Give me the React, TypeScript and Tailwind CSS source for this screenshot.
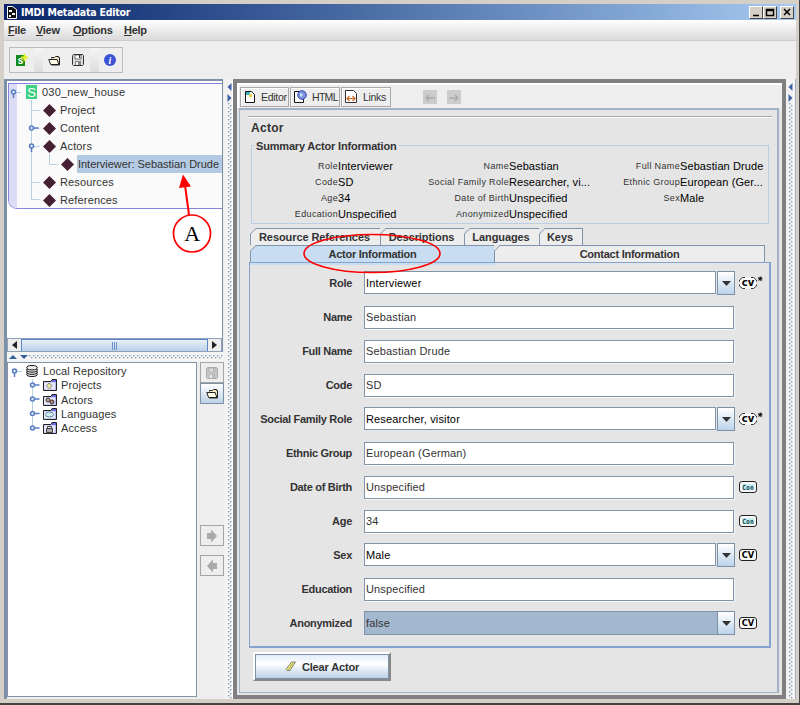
import type { ReactNode } from "react";
import clsx from "clsx";

type HelperKind = "cv" | "cv-open" | "con";
type Field = { label: string; value: string; combo?: boolean; disabled?: boolean; helper?: HelperKind };

const fields: Field[] = [
  { label: "Role", value: "Interviewer", combo: true, helper: "cv-open" },
  { label: "Name", value: "Sebastian" },
  { label: "Full Name", value: "Sebastian Drude" },
  { label: "Code", value: "SD" },
  { label: "Social Family Role", value: "Researcher, visitor", combo: true, helper: "cv-open" },
  { label: "Ethnic Group", value: "European (German)" },
  { label: "Date of Birth", value: "Unspecified", helper: "con" },
  { label: "Age", value: "34", helper: "con" },
  { label: "Sex", value: "Male", combo: true, helper: "cv" },
  { label: "Education", value: "Unspecified" },
  { label: "Anonymized", value: "false", combo: true, disabled: true, helper: "cv" },
];

const summary = [
  [["Role", "Interviewer"], ["Code", "SD"], ["Age", "34"], ["Education", "Unspecified"]],
  [["Name", "Sebastian"], ["Social Family Role", "Researcher, vi..."], ["Date of Birth", "Unspecified"], ["Anonymized", "Unspecified"]],
  [["Full Name", "Sebastian Drude"], ["Ethnic Group", "European (Ger..."], ["Sex", "Male"]],
];

function Dots({ id }: { id: string }) {
  return (
    <svg className="block h-full w-full">
      <defs>
        <pattern id={id} width="4" height="4" patternUnits="userSpaceOnUse">
          <rect width="4" height="4" fill="#f2f4f6" />
          <rect width="1.400" height="1.400" x="0" y="0" fill="#8b9db3" />
          <rect width="1.400" height="1.400" x="2" y="2" fill="#8b9db3" />
        </pattern>
      </defs>
      <rect width="100%" height="100%" fill={`url(#${id})`} />
    </svg>
  );
}

function VerticalDivider({ id }: { id: string }) {
  return (
    <div className="flex h-full flex-col items-end border-r border-white bg-[#f2f2f2] pt-[4px]">
      <svg width="5" height="20" className="shrink-0">
        <path d="M4.500 0v8L0.500 4z" fill="#3f5fa8" />
        <path d="M0.500 11v8L4.500 15z" fill="#3f5fa8" />
      </svg>
      <div className="w-[4px] grow"><Dots id={id} /></div>
    </div>
  );
}

function FolderIcon() {
  return (
    <svg width="13" height="11" viewBox="0 0 13 11">
      <path d="M3.500 3.500V2.500h3l1-1h3v1h1v7.500h-8" fill="#f4ecc8" stroke="#222" />
      <path d="M0.800 4.500h8.400l1.600 5H2.600z" fill="#fffbe6" stroke="#222" />
    </svg>
  );
}

function DiskIcon({ muted }: { muted?: boolean }) {
  const c = muted ? "#aaa" : "#333";
  return (
    <svg width="12" height="12" viewBox="0 0 12 12">
      <path d="M1.500 0.500h9l1 1v9l-1 1h-9l-1-1v-9z" fill={muted ? "#c6c6c6" : "#ddd"} stroke={c} />
      <path d="M3 1h6v4H3z" fill={muted ? "#ddd" : "#fff"} stroke={c} strokeWidth="0.700" />
      <path d="M3 7h6v4H3z" fill={muted ? "#bbb" : "#888"} />
      <path d="M4 8h2v3H4z" fill="#eee" />
      <path d="M7.500 1v3" stroke={c} />
    </svg>
  );
}

function BigArrow({ left }: { left?: boolean }) {
  return (
    <svg width="12" height="14" viewBox="0 0 12 14" className={clsx(left && "rotate-180")}>
      <path d="M1 4h4V0.500L11 7l-6 6.500V10H1z" fill="#a9a9a9" />
    </svg>
  );
}

function HelperIcon({ kind }: { kind: HelperKind }) {
  if (kind === "con") {
    return (
      <svg width="18" height="14" viewBox="0 0 18 14">
        <rect x="0.500" y="1.500" width="17" height="11" rx="2.500" fill="#f8f8f8" stroke="#222" />
        <rect x="3" y="4" width="12" height="6" fill="#c5eef2" />
        <text x="9" y="9.500" textAnchor="middle" textLength="11.500" lengthAdjust="spacingAndGlyphs" fontSize="7" fontWeight="700" fontFamily="DejaVu Sans Mono, monospace" fill="#0c4450">Con</text>
      </svg>
    );
  }
  const open = kind === "cv-open";
  return (
    <svg width="25" height="14" viewBox="0 0 25 14">
      {open ? (
        <>
          <rect x="1" y="1.500" width="16" height="11" rx="3" fill="#fafafa" />
          <path d="M6 1.500H3.500L0.500 4V5.500M0.500 8.500V10L3.500 12.500H6M12 1.500h2.500l3 2.500V5.500M17.500 8.500V10l-3 2.500H12" fill="none" stroke="#333" />
        </>
      ) : (
        <rect x="0.500" y="1.500" width="17" height="11" rx="2.500" fill="#fafafa" stroke="#222" />
      )}
      <text x="9" y="10.400" textAnchor="middle" textLength="12.500" lengthAdjust="spacingAndGlyphs" fontSize={open ? 10.5 : 9.5} fontWeight="700" fontFamily="DejaVu Sans, sans-serif" fill="#000">{open ? "cv" : "CV"}</text>
      {open && <path d="M19.500 1l3.500 3.500m0-3.500L19.500 4.500M21.250 0.500V5M19 2.750h4.500" stroke="#111" />}
    </svg>
  );
}

function Diamond() {
  return <svg width="13" height="13" className="shrink-0"><path d="M6.500 0L13 6.500 6.500 13 0 6.500z" fill="#452033" /></svg>;
}

function TreeRow({ label, deep }: { label: string; deep?: boolean }) {
  return (
    <div className={clsx("flex h-[18px] items-center", deep ? "pl-[52px]" : "pl-[34px]")}>
      <Diamond />
      <span className={clsx("ml-[3px] h-[18px] whitespace-nowrap pl-[1px] leading-[18px]", deep ? "grow bg-[#b3cae2] tracking-[-0.030px]" : "tracking-[0.150px]")}>{label}</span>
    </div>
  );
}

function Knob({ x, y, open }: { x: number; y: number; open?: boolean }) {
  return (
    <g stroke="#5a7dc0" strokeWidth="1.500" fill="#dce8f6">
      {open ? <path d={`M${x} ${y + 1}v5`} /> : <path d={`M${x + 1} ${y}h6`} />}
      <circle cx={x} cy={y} r="2" />
    </g>
  );
}

function ActorTree() {
  return (
    <div className="relative h-[126px] overflow-hidden rounded-bl-[9px] border-y border-l border-[#8484dc] bg-[#fafafa]">
      <div className="absolute inset-y-0 left-0 w-[8px] bg-[#dcdcf7]" />
      <svg width="60" height="124" className="absolute left-0 top-0">
        <path d="M6 8.500h6M22.500 16v99.500M22.500 26.500h8M22.500 44.500h8M22.500 62.500h8M22.500 98.500h8M22.500 115.500h8M40.500 70v10.500h8" fill="none" stroke="#b5cfe4" />
        <Knob x={4.5} y={8} open />
        <Knob x={22.5} y={44} />
        <Knob x={22.5} y={62} open />
      </svg>
      <div className="relative -mt-px">
        <div className="flex h-[18px] items-center pl-[17px]">
          <svg width="11" height="14">
            <rect width="11" height="14" fill="#3ed183" />
            <text x="5.500" y="11.500" textAnchor="middle" fontSize="13" fill="#fff">S</text>
          </svg>
          <span className="ml-[5px] tracking-[0.200px]">030_new_house</span>
        </div>
        <TreeRow label="Project" />
        <TreeRow label="Content" />
        <TreeRow label="Actors" />
        <TreeRow label="Interviewer: Sebastian Drude" deep />
        <TreeRow label="Resources" />
        <TreeRow label="References" />
      </div>
    </div>
  );
}

function RepoIcon({ kind }: { kind: string }) {
  return (
    <svg width="14" height="12" viewBox="0 0 14 12" className="shrink-0">
      <path d="M0.500 2.500H8l1-2h4.500v11H0.500z" fill="#b9b9f0" stroke="#222" />
      <path d="M9 1h4v2H9z" fill="#6a6ae0" />
      <path d="M1 3.500h11v7H1z" fill="#e6e6fa" />
      {kind === "Projects" && <path d="M6 4l3 2.500L6.500 10 3.500 7z" fill="#ece9a0" stroke="#666" strokeWidth="0.700" />}
      {kind === "Actors" && <><circle cx="5" cy="6" r="2" fill="#d7a490" stroke="#333" /><circle cx="9" cy="8" r="2" fill="#b88" stroke="#333" /></>}
      {kind === "Languages" && <ellipse cx="6.500" cy="6.500" rx="4" ry="2.500" fill="#cdeef2" stroke="#6a8a9a" />}
      {kind === "Access" && <><path d="M4.500 7V4.500h4V7" fill="none" stroke="#444" /><path d="M3.500 6.500h6v4h-6z" fill="#aaa" stroke="#444" /></>}
    </svg>
  );
}

function Repository() {
  return (
    <div className="relative h-full border border-[#8494a8] bg-white pt-px">
      <svg width="34" height="74" className="absolute left-0 top-0">
        <path d="M7 8.500h7M24.500 16v50" stroke="#b5cfe4" />
        <Knob x={6.5} y={8} open />
        <Knob x={24.5} y={22} />
        <Knob x={24.5} y={36} />
        <Knob x={24.5} y={50.5} />
        <Knob x={24.5} y={65} />
      </svg>
      <div className="relative tracking-[0.100px]">
        <div className="flex h-[14.300px] items-center pl-[18px]">
          <svg width="12" height="12" viewBox="0 0 12 12" fill="#eee" stroke="#111" strokeWidth="1">
            <ellipse cx="6" cy="9.300" rx="5.300" ry="2.200" />
            <ellipse cx="6" cy="7.100" rx="5.300" ry="2.200" />
            <ellipse cx="6" cy="4.900" rx="5.300" ry="2.200" />
            <ellipse cx="6" cy="2.700" rx="5.300" ry="2.200" />
          </svg>
          <span className="ml-[5px] leading-[14px]">Local Repository</span>
        </div>
        {["Projects", "Actors", "Languages", "Access"].map((name) => (
          <div key={name} className="flex h-[14.300px] items-center pl-[35px]">
            <RepoIcon kind={name} />
            <span className="ml-[4px] leading-[14px]">{name}</span>
          </div>
        ))}
      </div>
    </div>
  );
}

function SideButton({ children, active }: { children: ReactNode; active?: boolean }) {
  return (
    <button className={clsx("flex h-[21px] w-[24px] items-center justify-center border", active ? "border-[#7a8ea5] bg-gradient-to-b from-white to-[#bdd2e8]" : "border-[#a5a5a5] bg-[#eee]")}>
      {children}
    </button>
  );
}

function LeftPane() {
  return (
    <div className="flex w-[220px] shrink-0 flex-col border-l-[3px] border-[#7c90a8] bg-[#eee]">
      <div className="flex h-[273px] w-[216px] shrink-0 flex-col border-r border-t-2 border-[#7c90a8] bg-white pl-px pt-[2px]">
        <ActorTree />
        <div className="grow" />
        <div className="-ml-px flex h-[14px] border border-[#8da0b8] bg-[#eee]">
          <div className="flex w-[13px] items-center justify-center"><svg width="5" height="8"><path d="M5 0v8L0 4z" fill="#222" /></svg></div>
          <div className="flex grow items-center justify-center gap-px border-x border-t border-[#5c85ca] bg-gradient-to-b from-[#eaf2fb] to-[#b9d0e9]">
            <i className="h-[8px] w-px bg-[#6f91cc]" /><i className="h-[8px] w-px bg-[#6f91cc]" /><i className="h-[8px] w-px bg-[#6f91cc]" />
          </div>
          <div className="flex w-[13px] items-center justify-center"><svg width="5" height="8"><path d="M0 0v8L5 4z" fill="#222" /></svg></div>
        </div>
      </div>
      <div className="flex h-[10px] shrink-0 items-center bg-[#f4f4f4]">
        <svg width="20" height="5" className="ml-[2px] shrink-0"><path d="M0 4h8L4 0zM11 0h8l-4 4z" fill="#35609c" /></svg>
        <div className="h-[4px] w-[194px]"><Dots id="dots-h" /></div>
      </div>
      <div className="flex grow pb-[2px]">
        <div className="w-[190px]"><Repository /></div>
        <div className="ml-[3px] flex flex-col">
          <SideButton><DiskIcon muted /></SideButton>
          <SideButton active><FolderIcon /></SideButton>
          <div className="h-[121px]" />
          <SideButton><BigArrow /></SideButton>
          <div className="h-[9px]" />
          <SideButton><BigArrow left /></SideButton>
        </div>
      </div>
    </div>
  );
}

function ViewTab({ icon, label, width }: { icon: ReactNode; label: string; width: string }) {
  return (
    <button className={clsx("flex h-[20px] items-center gap-[5px] border border-[#a9a9a9] bg-[#eee] pl-[3px] text-[10.500px] shadow-[inset_1px_1px_0_#fff]", label === "HTML" ? "tracking-[-0.700px]" : "tracking-[-0.300px]", width)}>
      {icon}
      {label}
    </button>
  );
}

function FormTab({ label, width, active, tight }: { label: string; width: string; active?: boolean; tight?: boolean }) {
  return (
    <div className={clsx("relative flex h-[17px] items-center justify-center border-r border-t border-[#8095ad] pb-px font-bold", tight ? "tracking-[-0.250px]" : "pr-[2px] tracking-[-0.080px]", active ? "bg-[#c8ddf2]" : "bg-[#ededed]", width)}>
      <svg width="7" height="17" className="absolute -left-px -top-px">
        <path d="M0 0h6L0 6z" fill="#e5e5e5" />
        <path d="M0.500 17V6L6 0.500" fill="none" stroke="#8095ad" />
      </svg>
      <span className="relative">{label}</span>
    </div>
  );
}

function FieldRow({ f }: { f: Field }) {
  return (
    <div className="flex h-[34.050px] items-center">
      <div className="w-[102px] whitespace-nowrap text-right font-bold tracking-[-0.300px]">{f.label}</div>
      <div className="ml-[12px] w-[371px]">
        {f.combo ? (
          <div className="flex h-[24px]">
            <div className={clsx("flex grow items-center border pl-[1px]", f.disabled ? "h-full border-[#8294aa] bg-[#a3b8ce] text-[#333]" : "h-[23px] border-[#8294aa] bg-white text-black")}>
              <span className="tracking-[0.150px]">{f.value}</span>
            </div>
            <div className={clsx("flex w-[18px] items-center justify-center border border-[#7c90a8] bg-gradient-to-b from-white to-[#bdd3ea]", f.disabled ? "-ml-px" : "ml-px")}>
              <svg width="9" height="5"><path d="M0 0h9L4.500 5z" fill="#333" /></svg>
            </div>
          </div>
        ) : (
          <div className="flex h-[23px] w-[370px] items-center border border-[#8294aa] bg-white pl-[1px] tracking-[0.150px] text-[#333] shadow-[1px_1px_0_#f7f7f7]">{f.value}</div>
        )}
      </div>
      <div className="ml-[4px]">{f.helper && <HelperIcon kind={f.helper} />}</div>
    </div>
  );
}

function EditorPane() {
  return (
    <div className="flex w-[553px] shrink-0 flex-col border-4 border-[#808080] bg-[#e5e5e5]">
      <div className="flex h-[25px] shrink-0 items-center gap-px border-l-2 border-t-2 border-white bg-[#eee] pl-px">
        <ViewTab width="w-[49px]" label="Editor" icon={
          <svg width="12" height="12"><path d="M1.500 0.500h6l3 3v8h-9z" fill="#fff" stroke="#111" /><path d="M2 1h4v3H2z" fill="#3ab5c8" /><path d="M5 3h3v3H5z" fill="#e6d54a" /></svg>
        } />
        <ViewTab width="w-[50px]" label="HTML" icon={
          <svg width="13" height="13" className="shrink-0"><path d="M0.500 1.500h6l3 3v8h-9z" fill="#fff" stroke="#111" /><circle cx="8" cy="5" r="4.300" fill="#8190de" stroke="#3a48b8" /><path d="M6 3l3 1-1 3-2-1z" fill="#bfe0f0" /></svg>
        } />
        <ViewTab width="w-[50px]" label="Links" icon={
          <svg width="13" height="13" className="shrink-0"><path d="M0.500 0.500h8l3 3v9H0.500z" fill="#fff" stroke="#333" /><path d="M2 8.500h8M4.500 6L2 8.500 4.500 11M7.500 6L10 8.500 7.500 11" fill="none" stroke="#d2691e" strokeWidth="1.200" /></svg>
        } />
        <div className="ml-[31px] flex gap-[10px]">
          <svg width="14" height="14"><rect width="14" height="14" fill="#ccc" /><path d="M3 8h9M6 5L3 8l3 3" fill="none" stroke="#aaa" strokeWidth="1.300" /></svg>
          <svg width="14" height="14"><rect width="14" height="14" fill="#ccc" /><path d="M2 8h9M8 5l3 3-3 3" fill="none" stroke="#aaa" strokeWidth="1.300" /></svg>
        </div>
      </div>
      <div className="ml-[2px] mr-[3px] flex grow flex-col border-2 border-b border-l border-[#a3b3c6] bg-[#e5e5e5] pl-[9px]">
        <div className="-ml-px mt-[6px] h-[2px] w-[524px] border-b border-t border-b-white border-t-[#aaa]" />
        <div className="mt-px h-[16px] pl-[2px] text-[12px] font-bold leading-[18px] tracking-[0.300px]">Actor</div>
        {/* summary box */}
        <fieldset className="ml-[2px] mt-[2px] h-[87px] w-[518px] shrink-0 border border-[#b8cfe5] px-[2px]">
          <legend className="h-[16px] px-[2px] font-bold leading-[18px] tracking-[-0.180px]">Summary Actor Information</legend>
          <div className="flex pt-[5px]">
            {summary.map((col, i) => (
              <div key={i} className={clsx("flex flex-col", i === 2 ? "w-[160px]" : "w-[171px]")}>
                {col.map(([k, v]) => (
                  <div key={k} className="flex h-[16px] items-center whitespace-nowrap">
                    <span className="w-[84px] shrink-0 text-right text-[9px] tracking-[0.350px] text-[#333]">{k}</span>
                    <span className="tracking-[0.100px] text-black">{v}</span>
                  </div>
                ))}
              </div>
            ))}
          </div>
        </fieldset>
        {/* form tabs */}
        <div className="ml-[2px] mt-[4px] flex">
          <FormTab label="Resource References" width="w-[130px]" />
          <FormTab label="Descriptions" width="w-[84px]" />
          <FormTab label="Languages" width="w-[75px]" />
          <FormTab label="Keys" width="w-[43px]" />
        </div>
        <div className="relative z-10 ml-[2px] flex">
          <FormTab label="Actor Information" width="w-[244px]" active tight />
          <FormTab label="Contact Information" width="w-[270px]" tight />
        </div>
        <div className="h-[386px] w-[522px] shrink-0 border border-b-2 border-r-2 border-[#84a4cf]">
          <div className="h-[2px] w-[245px] bg-[#c8ddf2]" />
          <div className="pt-px">
            {fields.map((f) => <FieldRow key={f.label} f={f} />)}
          </div>
        </div>
        <div className="ml-[4px] mt-[4px] w-[138px] border-2 border-b-[#888] border-l-white border-r-[#888] border-t-white">
          <button className="flex h-[25px] w-full items-center justify-center gap-[5px] border border-[#7c90a8] bg-gradient-to-b from-[#e2edf8] via-white via-40% to-[#b9d0e8] font-bold tracking-[-0.150px]">
            <svg width="12" height="11"><path d="M1 8.500L6.500 1h4L5 9.500H2z" fill="#f2ee70" stroke="#666" strokeWidth="0.800" /><path d="M3.500 8.500l5-7" stroke="#888" strokeWidth="0.700" /></svg>
            Clear Actor
          </button>
        </div>
      </div>
      <div className="h-[2px]" />
    </div>
  );
}

function TitleBar() {
  return (
    <div className="flex h-[16px] shrink-0 items-center bg-gradient-to-r from-[#0a246a] to-[#a6caf0] pl-[3px] pr-[2px]">
      <svg width="10" height="13"><path d="M0.500 0.500h5l4 3v9h-9z" fill="#111" stroke="#fff" /><path d="M2 4h3v2H2zM5 7h3v2H5zM2 9h2v2H2z" fill="#fff" /></svg>
      <span className="ml-[4px] font-['DejaVu_Sans_Condensed','DejaVu_Sans',sans-serif] text-[10.500px] font-bold tracking-[-0.220px] text-white">IMDI Metadata Editor</span>
      <div className="ml-auto flex">
        {["M3 8.500h6", "M2.500 2.500h7v6h-7zM2.500 3.500h7", "M3 2l6 6M9 2L3 8"].map((d, i) => (
          <div key={d} className={clsx("flex h-[13px] w-[14px] border border-b-[#444] border-l-white border-r-[#444] border-t-white bg-[#d4d0c8]", i === 2 && "ml-[3px]")}>
            <svg width="12" height="11"><path d={d} fill="none" stroke="#000" strokeWidth="1.500" /></svg>
          </div>
        ))}
      </div>
    </div>
  );
}

function MainToolbar() {
  return (
    <div className="flex h-[38px] shrink-0 items-center bg-[#eee] pl-[5px]">
      <div className="flex h-[26px] w-[114px] items-center border border-[#bbb]">
        <svg width="12" height="12" className="ml-[6px]">
          <path d="M0 1h9v11H0z" fill="#148a1c" />
          <text x="4.500" y="10" textAnchor="middle" fontSize="10" fontWeight="700" fill="#fff">s</text>
          <path d="M8.500 0v7M5 3.500h7" stroke="#e4ee20" strokeWidth="2" />
        </svg>
        <div className="ml-[6px] h-full w-[9px] bg-gradient-to-b from-[#f5f5f5] to-[#ddd]" />
        <span className="ml-[5px]"><FolderIcon /></span>
        <span className="ml-[11px]"><DiskIcon /></span>
        <div className="ml-[6px] h-full w-[9px] bg-gradient-to-b from-[#f5f5f5] to-[#ddd]" />
        <svg width="12" height="12" className="ml-[5px]">
          <circle cx="6" cy="6" r="6" fill="#3b52d6" />
          <text x="6" y="9.500" textAnchor="middle" fontSize="10" fontWeight="700" fontStyle="italic" fontFamily="Liberation Serif, serif" fill="#fff">i</text>
        </svg>
      </div>
    </div>
  );
}

export default function App() {
  return (
    <div className="relative flex h-[705px] w-[800px] flex-col overflow-hidden border-b-2 border-r border-[#444] bg-[#d4d0c8] font-['Liberation_Sans',Arial,sans-serif] text-[11px] leading-[14px] text-[#333]">
      <div className="ml-[4px] mr-[3px] mt-[4px] flex h-[695px] flex-col bg-[#eee]">
        <TitleBar />
        <div className="flex h-[21px] shrink-0 items-center border-b border-[#ccc] bg-gradient-to-b from-white to-[#dadada] pl-[4px] font-bold tracking-[-0.300px]">
          {[["F", "ile", "w-[28px]"], ["V", "iew", "w-[37px]"], ["O", "ptions", "w-[51px]"], ["H", "elp", "w-[40px]"]].map(([k, rest, w]) => (
            <span key={rest} className={w}><u>{k}</u>{rest}</span>
          ))}
        </div>
        <MainToolbar />
        <div className="flex grow">
          <LeftPane />
          <div className="w-[9px] shrink-0"><VerticalDivider id="dots-left" /></div>
          <EditorPane />
          <div className="w-[8px] shrink-0"><VerticalDivider id="dots-right" /></div>
          <div className="ml-px w-[2px] bg-[#a3b3c6]" />
        </div>
      </div>
      {/* callouts */}
      <svg width="800" height="705" className="pointer-events-none absolute left-0 top-0 z-20">
        <ellipse cx="372" cy="253.500" rx="68" ry="19" fill="none" stroke="#f00" strokeWidth="1.600" />
        <path d="M189 215l-4-30" stroke="#f00" strokeWidth="2" />
        <path d="M183 174.500l8 12-12 1.500z" fill="#f00" />
        <circle cx="192" cy="233.500" r="18.500" fill="#fff" stroke="#f00" strokeWidth="1.700" />
        <text x="192.300" y="240.500" textAnchor="middle" fontSize="22" fontFamily="Liberation Serif, serif" fill="#000">A</text>
      </svg>
    </div>
  );
}
